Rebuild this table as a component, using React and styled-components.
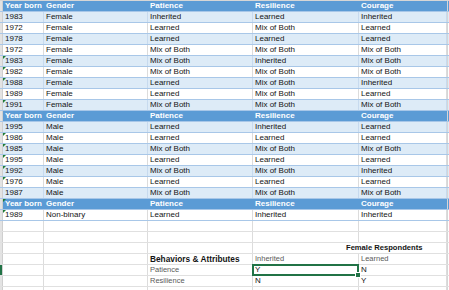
import React from 'react'
import styled, { createGlobalStyle } from "styled-components";

const female = [
  ["1983", "Female", "Inherited", "Learned", "Inherited", false],
  ["1972", "Female", "Learned", "Mix of Both", "Learned", false],
  ["1978", "Female", "Learned", "Learned", "Learned", false],
  ["1972", "Female", "Mix of Both", "Mix of Both", "Mix of Both", false],
  ["1983", "Female", "Mix of Both", "Inherited", "Mix of Both", true],
  ["1982", "Female", "Mix of Both", "Mix of Both", "Mix of Both", true],
  ["1988", "Female", "Learned", "Mix of Both", "Inherited", true],
  ["1989", "Female", "Learned", "Mix of Both", "Learned", false],
  ["1991", "Female", "Mix of Both", "Mix of Both", "Mix of Both", true],
];

const male = [
  ["1995", "Male", "Learned", "Inherited", "Learned", false],
  ["1986", "Male", "Learned", "Learned", "Learned", true],
  ["1985", "Male", "Mix of Both", "Mix of Both", "Mix of Both", true],
  ["1995", "Male", "Learned", "Learned", "Learned", true],
  ["1992", "Male", "Mix of Both", "Mix of Both", "Inherited", true],
  ["1976", "Male", "Learned", "Learned", "Learned", true],
  ["1987", "Male", "Mix of Both", "Mix of Both", "Mix of Both", false],
];

const other = [
  ["1989", "Non-binary", "Learned", "Inherited", "Inherited", true],
];

const headers = ["Year born", "Gender", "Patience", "Resilience", "Courage"];

const GlobalStyle = createGlobalStyle`
  body {
    margin: 0;
    background: #ffffff;
    font-family: "Liberation Sans", Arial, sans-serif;
  }
`

const Sheet = styled.div`
  width: 449px;
  height: 290px;
  overflow: hidden;
  display: flex;
  flex-direction: column;
  border-top: 1px solid #d6d6d6;
  box-sizing: border-box;
`

const Row = styled.div`
  display: grid;
  grid-template-columns: 3px 41px 104px 105px 106px 88px 1fr;
  height: 10px;
  flex-shrink: 0;
  border-bottom: 1px solid ${p => p.$kind === "grid" ? "#e0e0e0" : "#a8c7e8"};
  background: ${p => p.$kind === "head" ? "#5b9bd5" : p.$kind === "band" ? "#ddebf7" : "#ffffff"};
`

const Gutter = styled.div`
  background: ${p => p.$active ? "#217346" : "#e3e3e3"};
  border-right: 1px solid #cfcfcf;
  box-sizing: border-box;
`

const Cell = styled.div`
  position: relative;
  box-sizing: border-box;
  padding-left: ${p => p.$pad || 2}px;
  font-size: ${p => p.$size || 8}px;
  line-height: 10px;
  white-space: nowrap;
  font-weight: ${p => p.$bold ? 700 : 400};
  color: ${p => p.$head ? "#ffffff" : p.$muted ? "#5a5a5a" : "#141414"};
  border-right: 1px solid ${p => p.$head ? "transparent" : p.$band ? "#c7daee" : "#dcdcdc"};
  grid-column: ${p => p.$span ? `span ${p.$span}` : "auto"};

  ${p => p.$flag && `
    &::before {
      content: "";
      position: absolute;
      left: 0;
      top: 0;
      border-top: 3px solid #1e7b34;
      border-right: 3px solid transparent;
    }
  `}

  ${p => p.$selected && `
    &::after {
      content: "";
      position: absolute;
      left: -1px;
      top: -1px;
      right: -1px;
      bottom: -1px;
      border: 2px solid #217346;
    }
  `}
`

const Handle = styled.span`
  position: absolute;
  right: -3px;
  bottom: -3px;
  width: 4px;
  height: 4px;
  background: #217346;
  border: 1px solid #ffffff;
  z-index: 2;
`

const Edge = styled.div`
  border-left: 1px solid #d6d6d6;
`

const HeadRow = ({ flag }) => (
  <Row $kind="head">
    <Gutter />
    {headers.map((h, i) => (
      <Cell key={h} $head $bold $flag={flag && i === 0}>{h}</Cell>
    ))}
    <Edge />
  </Row>
)

const DataRows = ({ rows }) => rows.map((r, i) => {
  const band = i % 2 === 0 && rows.length > 1;
  return (
    <Row key={i} $kind={band ? "band" : "plain"}>
      <Gutter />
      {r.slice(0, 5).map((v, j) => (
        <Cell key={j} $band={band} $flag={j === 0 && r[5]}>{v}</Cell>
      ))}
      <Edge />
    </Row>
  )
})

const EmptyRow = () => (
  <Row $kind="grid">
    <Gutter />
    <Cell />
    <Cell />
    <Cell />
    <Cell />
    <Cell />
    <Edge />
  </Row>
)

const App = () => {
  return (
    <>
      <GlobalStyle />
      <Sheet>
        <HeadRow />
        <DataRows rows={female} />
        <HeadRow />
        <DataRows rows={male} />
        <HeadRow flag />
        <DataRows rows={other} />
        <EmptyRow />
        <EmptyRow />
        <Row $kind="grid">
          <Gutter />
          <Cell />
          <Cell />
          <Cell />
          <Cell $span={2} $bold $pad={93} $size={7.6}>Female Respondents</Cell>
          <Edge />
        </Row>
        <Row $kind="grid">
          <Gutter />
          <Cell />
          <Cell />
          <Cell $bold $size={8.3}>Behaviors &amp; Attributes</Cell>
          <Cell $muted $size={7.5}>Inherited</Cell>
          <Cell $muted $size={7.5}>Learned</Cell>
          <Edge />
        </Row>
        <Row $kind="grid">
          <Gutter $active />
          <Cell />
          <Cell />
          <Cell $muted $size={7.5}>Patience</Cell>
          <Cell $selected>Y<Handle /></Cell>
          <Cell>N</Cell>
          <Edge />
        </Row>
        <Row $kind="grid">
          <Gutter />
          <Cell />
          <Cell />
          <Cell $muted $size={7.5}>Resilience</Cell>
          <Cell>N</Cell>
          <Cell>Y</Cell>
          <Edge />
        </Row>
        <EmptyRow />
      </Sheet>
    </>
  )
}

export default App;
